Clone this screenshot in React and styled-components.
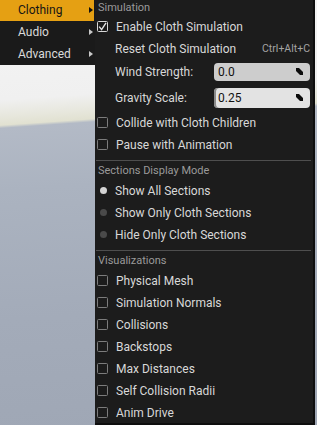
import React from "react";
import styled, { createGlobalStyle } from "styled-components";

const Global = createGlobalStyle`
  html, body { margin: 0; padding: 0; background: #a6aebb; }
  body { width: 317px; height: 425px; overflow: hidden; font-family: Roboto, "Noto Sans", sans-serif; }
`;

const Page = styled.div`
  width: 317px;
  height: 425px;
  display: flex;
  align-items: flex-start;
  overflow: hidden;
  background-color: #a6aebb;
  background-image: linear-gradient(
    176deg,
    #f5f5f5 0px,
    #f0f0f0 100px,
    #e7e7dd 116px,
    #e1e1d1 125px,
    #b3bac6 128px,
    #abb3c0 190px,
    #a3abb9 320px,
    #9fa7b5 440px
  );
`;

const MainMenu = styled.div`
  width: 95px;
  margin-top: -1px;
  background: #1a1a1a;
  display: flex;
  flex-direction: column;
`;

const MenuItem = styled.div`
  height: 22px;
  margin-right: 1px;
  padding: 0 1px 0 18px;
  display: flex;
  align-items: center;
  justify-content: space-between;
  font-size: 12px;
  color: ${(p) => (p.$active ? "#151515" : "#dadada")};
  background: ${(p) => (p.$active ? "#e5a013" : "transparent")};
`;

const Arrow = styled.span`
  width: 0;
  height: 0;
  border-left: 4px solid ${(p) => (p.$dark ? "#111" : "#c8c8c8")};
  border-top: 3px solid transparent;
  border-bottom: 3px solid transparent;
`;

const SubMenu = styled.div`
  width: 218px;
  height: 423px;
  background: #1c1c1c;
  border-right: 2px solid #0e0e0e;
  border-bottom: 2px solid #0e0e0e;
  display: flex;
  flex-direction: column;
`;

const Header = styled.div`
  height: ${(p) => (p.$compact ? 15 : 18)}px;
  line-height: ${(p) => (p.$compact ? 15 : 19)}px;
  padding-left: 3px;
  font-size: 11px;
  color: #9a9a9a;
`;

const Separator = styled.div`
  height: 1px;
  margin: 5px 2px 0 1px;
  background: #4e4e4e;
`;

const Row = styled.div`
  height: ${(p) => p.$h || 22}px;
  display: flex;
  align-items: center;
  font-size: 12px;
  color: #d8d8d8;
  padding-right: 3px;
`;

const Box = styled.span`
  width: 9px;
  height: 9px;
  margin: 0 8px 0 2px;
  border: 1px solid ${(p) => (p.$checked ? "#d8d8d8" : "#7c7c7c")};
  border-radius: 1.5px;
  display: flex;
  align-items: center;
  justify-content: center;
  flex: none;
`;

const Dot = styled.span`
  width: 7px;
  height: 7px;
  border-radius: 50%;
  margin: 0 8px 0 5px;
  background: ${(p) => (p.$on ? "#d4d4d4" : "#4a4a4a")};
  flex: none;
`;

const Label = styled.span`
  flex: 1;
  padding-left: ${(p) => (p.$indent ? 20 : 0)}px;
  padding-top: 1px;
  white-space: nowrap;
`;

const Shortcut = styled.span`
  font-size: 10.5px;
  padding-top: 1px;
  color: #a3a3a3;
`;

const Input = styled.div`
  width: 96px;
  height: ${(p) => p.$h}px;
  border-radius: 4px;
  background: ${(p) => p.$bg};
  box-shadow: ${(p) => (p.$slider ? "inset 2px 0 0 #8a8a8a" : "none")};
  display: flex;
  align-items: center;
  justify-content: space-between;
  padding: 0 7px 0 4px;
  box-sizing: border-box;
  color: #111;
  font-size: 12px;
`;

const Check = () => (
  <svg width="9" height="9" viewBox="0 0 9 9">
    <path d="M1.2 4.6 L3.6 7.6 L8 0.8" fill="none" stroke="#e6e6e6" strokeWidth="1.4" />
  </svg>
);

const Spin = () => (
  <svg width="7" height="7" viewBox="0 0 7 7">
    <polygon points="0,0 3,0 7,4 7,7 4,7 0,3" fill="#0c0c0c" />
  </svg>
);

const CheckRow = ({ checked, children }) => (
  <Row>
    <Box $checked={checked}>{checked && <Check />}</Box>
    <Label>{children}</Label>
  </Row>
);

const RadioRow = ({ on, children }) => (
  <Row>
    <Dot $on={on} />
    <Label>{children}</Label>
  </Row>
);

const vis = [
  "Physical Mesh",
  "Simulation Normals",
  "Collisions",
  "Backstops",
  "Max Distances",
  "Self Collision Radii",
  "Anim Drive",
];

export default function App() {
  return (
    <Page>
      <Global />
      <MainMenu>
        <MenuItem $active>
          Clothing <Arrow $dark />
        </MenuItem>
        <MenuItem>
          Audio <Arrow />
        </MenuItem>
        <MenuItem>
          Advanced <Arrow />
        </MenuItem>
      </MainMenu>
      <SubMenu>
        <Header $compact>Simulation</Header>
        <CheckRow checked>Enable Cloth Simulation</CheckRow>
        <Row>
          <Label $indent>Reset Cloth Simulation</Label>
          <Shortcut>Ctrl+Alt+C</Shortcut>
        </Row>
        <Row $h={25}>
          <Label $indent>Wind Strength:</Label>
          <Input $h={18} $bg="#cdcdcd">
            0.0 <Spin />
          </Input>
        </Row>
        <Row $h={27}>
          <Label $indent>Gravity Scale:</Label>
          <Input $h={20} $bg="#e3e3e3" $slider>
            0.25 <Spin />
          </Input>
        </Row>
        <CheckRow>Collide with Cloth Children</CheckRow>
        <CheckRow>Pause with Animation</CheckRow>
        <Separator />
        <Header>Sections Display Mode</Header>
        <RadioRow on>Show All Sections</RadioRow>
        <RadioRow>Show Only Cloth Sections</RadioRow>
        <RadioRow>Hide Only Cloth Sections</RadioRow>
        <Separator />
        <Header>Visualizations</Header>
        {vis.map((v) => (
          <CheckRow key={v}>{v}</CheckRow>
        ))}
      </SubMenu>
    </Page>
  );
}
